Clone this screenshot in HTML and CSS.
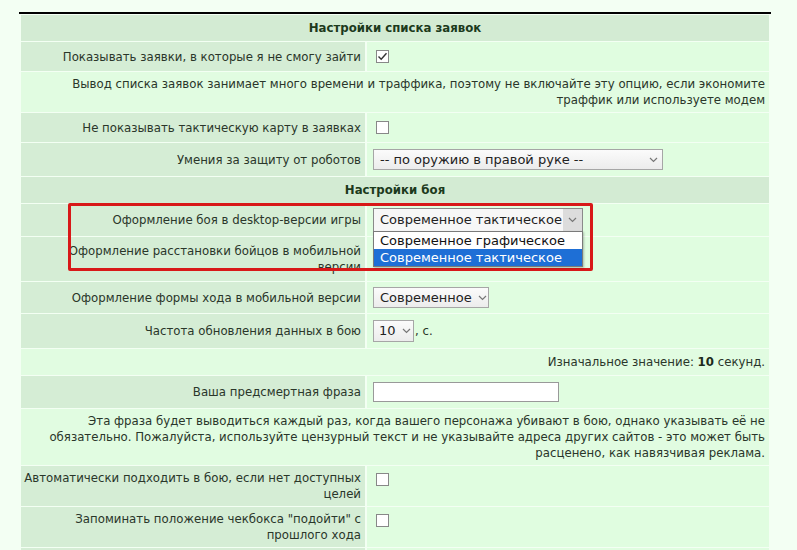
FILE: index.html
```html
<!DOCTYPE html>
<html lang="ru">
<head>
  <meta charset="UTF-8">
  <title>Настройки</title>
  <link rel="stylesheet" href="styles.css">
</head>
<body>
  <div class="page">
    <table class="settings">
      <tr><th colspan="2" class="section">Настройки списка заявок</th></tr>
      <tr>
        <td class="label">Показывать заявки, в которые я не смогу зайти</td>
        <td class="value"><span class="checkbox checked"><svg width="11" height="11" viewBox="0 0 11 11"><path d="M1.5 5.5 L4.2 8.2 L9.5 2.2" fill="none" stroke="#333" stroke-width="1.4"/></svg></span></td>
      </tr>
      <tr><td colspan="2" class="note">Вывод списка заявок занимает много времени и траффика, поэтому не включайте эту опцию, если экономите траффик или используете модем</td></tr>
      <tr>
        <td class="label">Не показывать тактическую карту в заявках</td>
        <td class="value"><span class="checkbox"></span></td>
      </tr>
      <tr>
        <td class="label">Умения за защиту от роботов</td>
        <td class="value"><span class="select w-robots">-- по оружию в правой руке --<span class="arrow"><svg width="9" height="6" viewBox="0 0 9 6"><path d="M1 1 L4.5 4.5 L8 1" fill="none" stroke="#777" stroke-width="1.2"/></svg></span></span></td>
      </tr>
      <tr><th colspan="2" class="section">Настройки боя</th></tr>
      <tr>
        <td class="label">Оформление боя в desktop-версии игры</td>
        <td class="value">
          <span class="select-wrap">
            <span class="select open w-view">Современное тактическое<span class="arrow"><svg width="9" height="6" viewBox="0 0 9 6"><path d="M1 1 L4.5 4.5 L8 1" fill="none" stroke="#777" stroke-width="1.2"/></svg></span></span>
            <span class="popup">
              <span class="option">Современное графическое</span>
              <span class="option active">Современное тактическое</span>
            </span>
          </span>
        </td>
      </tr>
      <tr>
        <td class="label">Оформление расстановки бойцов в мобильной версии</td>
        <td class="value"><span class="spacer"></span></td>
      </tr>
      <tr>
        <td class="label">Оформление формы хода в мобильной версии</td>
        <td class="value"><span class="select w-form">Современное<span class="arrow"><svg width="9" height="6" viewBox="0 0 9 6"><path d="M1 1 L4.5 4.5 L8 1" fill="none" stroke="#777" stroke-width="1.2"/></svg></span></span></td>
      </tr>
      <tr>
        <td class="label">Частота обновления данных в бою</td>
        <td class="value"><span class="select w-rate">10<span class="arrow"><svg width="9" height="6" viewBox="0 0 9 6"><path d="M1 1 L4.5 4.5 L8 1" fill="none" stroke="#777" stroke-width="1.2"/></svg></span></span>, с.</td>
      </tr>
      <tr><td colspan="2" class="note short">Изначальное значение: <b>10</b> секунд.</td></tr>
      <tr>
        <td class="label">Ваша предсмертная фраза</td>
        <td class="value"><span class="text-input"></span></td>
      </tr>
      <tr><td colspan="2" class="note">Эта фраза будет выводиться каждый раз, когда вашего персонажа убивают в бою, однако указывать её не обязательно. Пожалуйста, используйте цензурный текст и не указывайте адреса других сайтов - это может быть расценено, как навязчивая реклама.</td></tr>
      <tr>
        <td class="label">Автоматически подходить в бою, если нет доступных целей</td>
        <td class="value top"><span class="checkbox"></span></td>
      </tr>
      <tr>
        <td class="label">Запоминать положение чекбокса "подойти" с прошлого хода</td>
        <td class="value top"><span class="checkbox"></span></td>
      </tr>
      <tr>
        <td class="label">&nbsp;</td>
        <td class="value"></td>
      </tr>
    </table>
    <div class="highlight"></div>
  </div>
</body>
</html>
```

FILE: styles.css
```css
body {
  margin: 0;
  background: #f3fff3;
  font-family: "DejaVu Sans", Verdana, sans-serif;
  font-size: 11.75px;
  color: #2a362a;
  overflow: hidden;
}

.page {
  position: relative;
  padding-top: 12px;
  padding-left: 19px;
}

.settings {
  width: 752px;
  border-collapse: separate;
  border-spacing: 2px 1px;
  border-top: 2px solid #000;
  line-height: 16px;
}

.settings td,
.settings th {
  padding: 4px;
}

.settings th.section {
  padding: 5px 4px;
  background: #d3ebd3;
  color: #1c3a1c;
  font-weight: bold;
  text-align: center;
}

.settings td.label {
  width: 339px;
  padding-left: 1px;
  background: #d5edd5;
  text-align: right;
  vertical-align: middle;
}

.settings td.value {
  background: #e0fde0;
  padding-left: 6px;
  vertical-align: middle;
}

.settings td.value.top {
  vertical-align: top;
}

.note {
  background: #e1fce1;
  text-align: right;
}

.settings td.note.short {
  padding: 5px 4px;
}

.note b {
  color: #1c2a1c;
}

.spacer {
  display: inline-block;
  height: 36px;
  vertical-align: middle;
}

.checkbox {
  display: inline-block;
  box-sizing: border-box;
  width: 13px;
  height: 13px;
  margin: 4px 0 4px 3px;
  border: 1px solid #888;
  background: #fff;
  vertical-align: middle;
  position: relative;
}

.value.top .checkbox {
  margin-top: 3px;
}

.checkbox svg {
  position: absolute;
  left: 0;
  top: 0;
}

.select {
  display: inline-flex;
  align-items: center;
  box-sizing: border-box;
  height: 21px;
  margin: 2px 0;
  padding: 0 4px 0 6px;
  border: 1px solid #a6a6a6;
  background: linear-gradient(#fbfbfb, #ececec);
  font-size: 13px;
  color: #222;
  vertical-align: middle;
  white-space: nowrap;
}

.select .arrow {
  margin-left: auto;
  display: flex;
  align-items: center;
  padding-left: 6px;
}

.w-robots { width: 290px; }
.w-form { width: 116px; margin: 1px 0; }
.w-rate { width: 41px; height: 22px; padding-left: 5px; margin-right: 1px; }
.w-view { width: 210px; height: 24px; margin: 0; }

.select.open {
  background: #f7f7f7;
  border-color: #8a8a8a;
}

.select.open .arrow {
  align-self: stretch;
  margin-right: -4px;
  padding: 0 5px;
  background: #dcdcdc;
}

.select-wrap {
  position: relative;
  display: inline-block;
  vertical-align: middle;
}

.popup {
  position: absolute;
  left: 0;
  top: 23px;
  z-index: 3;
  width: 210px;
  box-sizing: border-box;
  border: 1px solid #7a7a7a;
  background: #fff;
  box-shadow: 1px 1px 2px rgba(0, 0, 0, 0.25);
}

.option {
  display: block;
  padding: 0 6px;
  font-size: 13px;
  line-height: 17px;
  color: #111;
  white-space: nowrap;
}

.option.active {
  background: #1e6fd6;
  color: #fff;
}

.text-input {
  display: inline-block;
  box-sizing: border-box;
  width: 186px;
  height: 20px;
  margin: 2px 0;
  border: 1px solid #999;
  background: #fff;
  vertical-align: middle;
}

.highlight {
  position: absolute;
  left: 68px;
  top: 203px;
  width: 519px;
  height: 62px;
  border: 3px solid #d81818;
  border-radius: 2px;
  z-index: 2;
  pointer-events: none;
}
```
